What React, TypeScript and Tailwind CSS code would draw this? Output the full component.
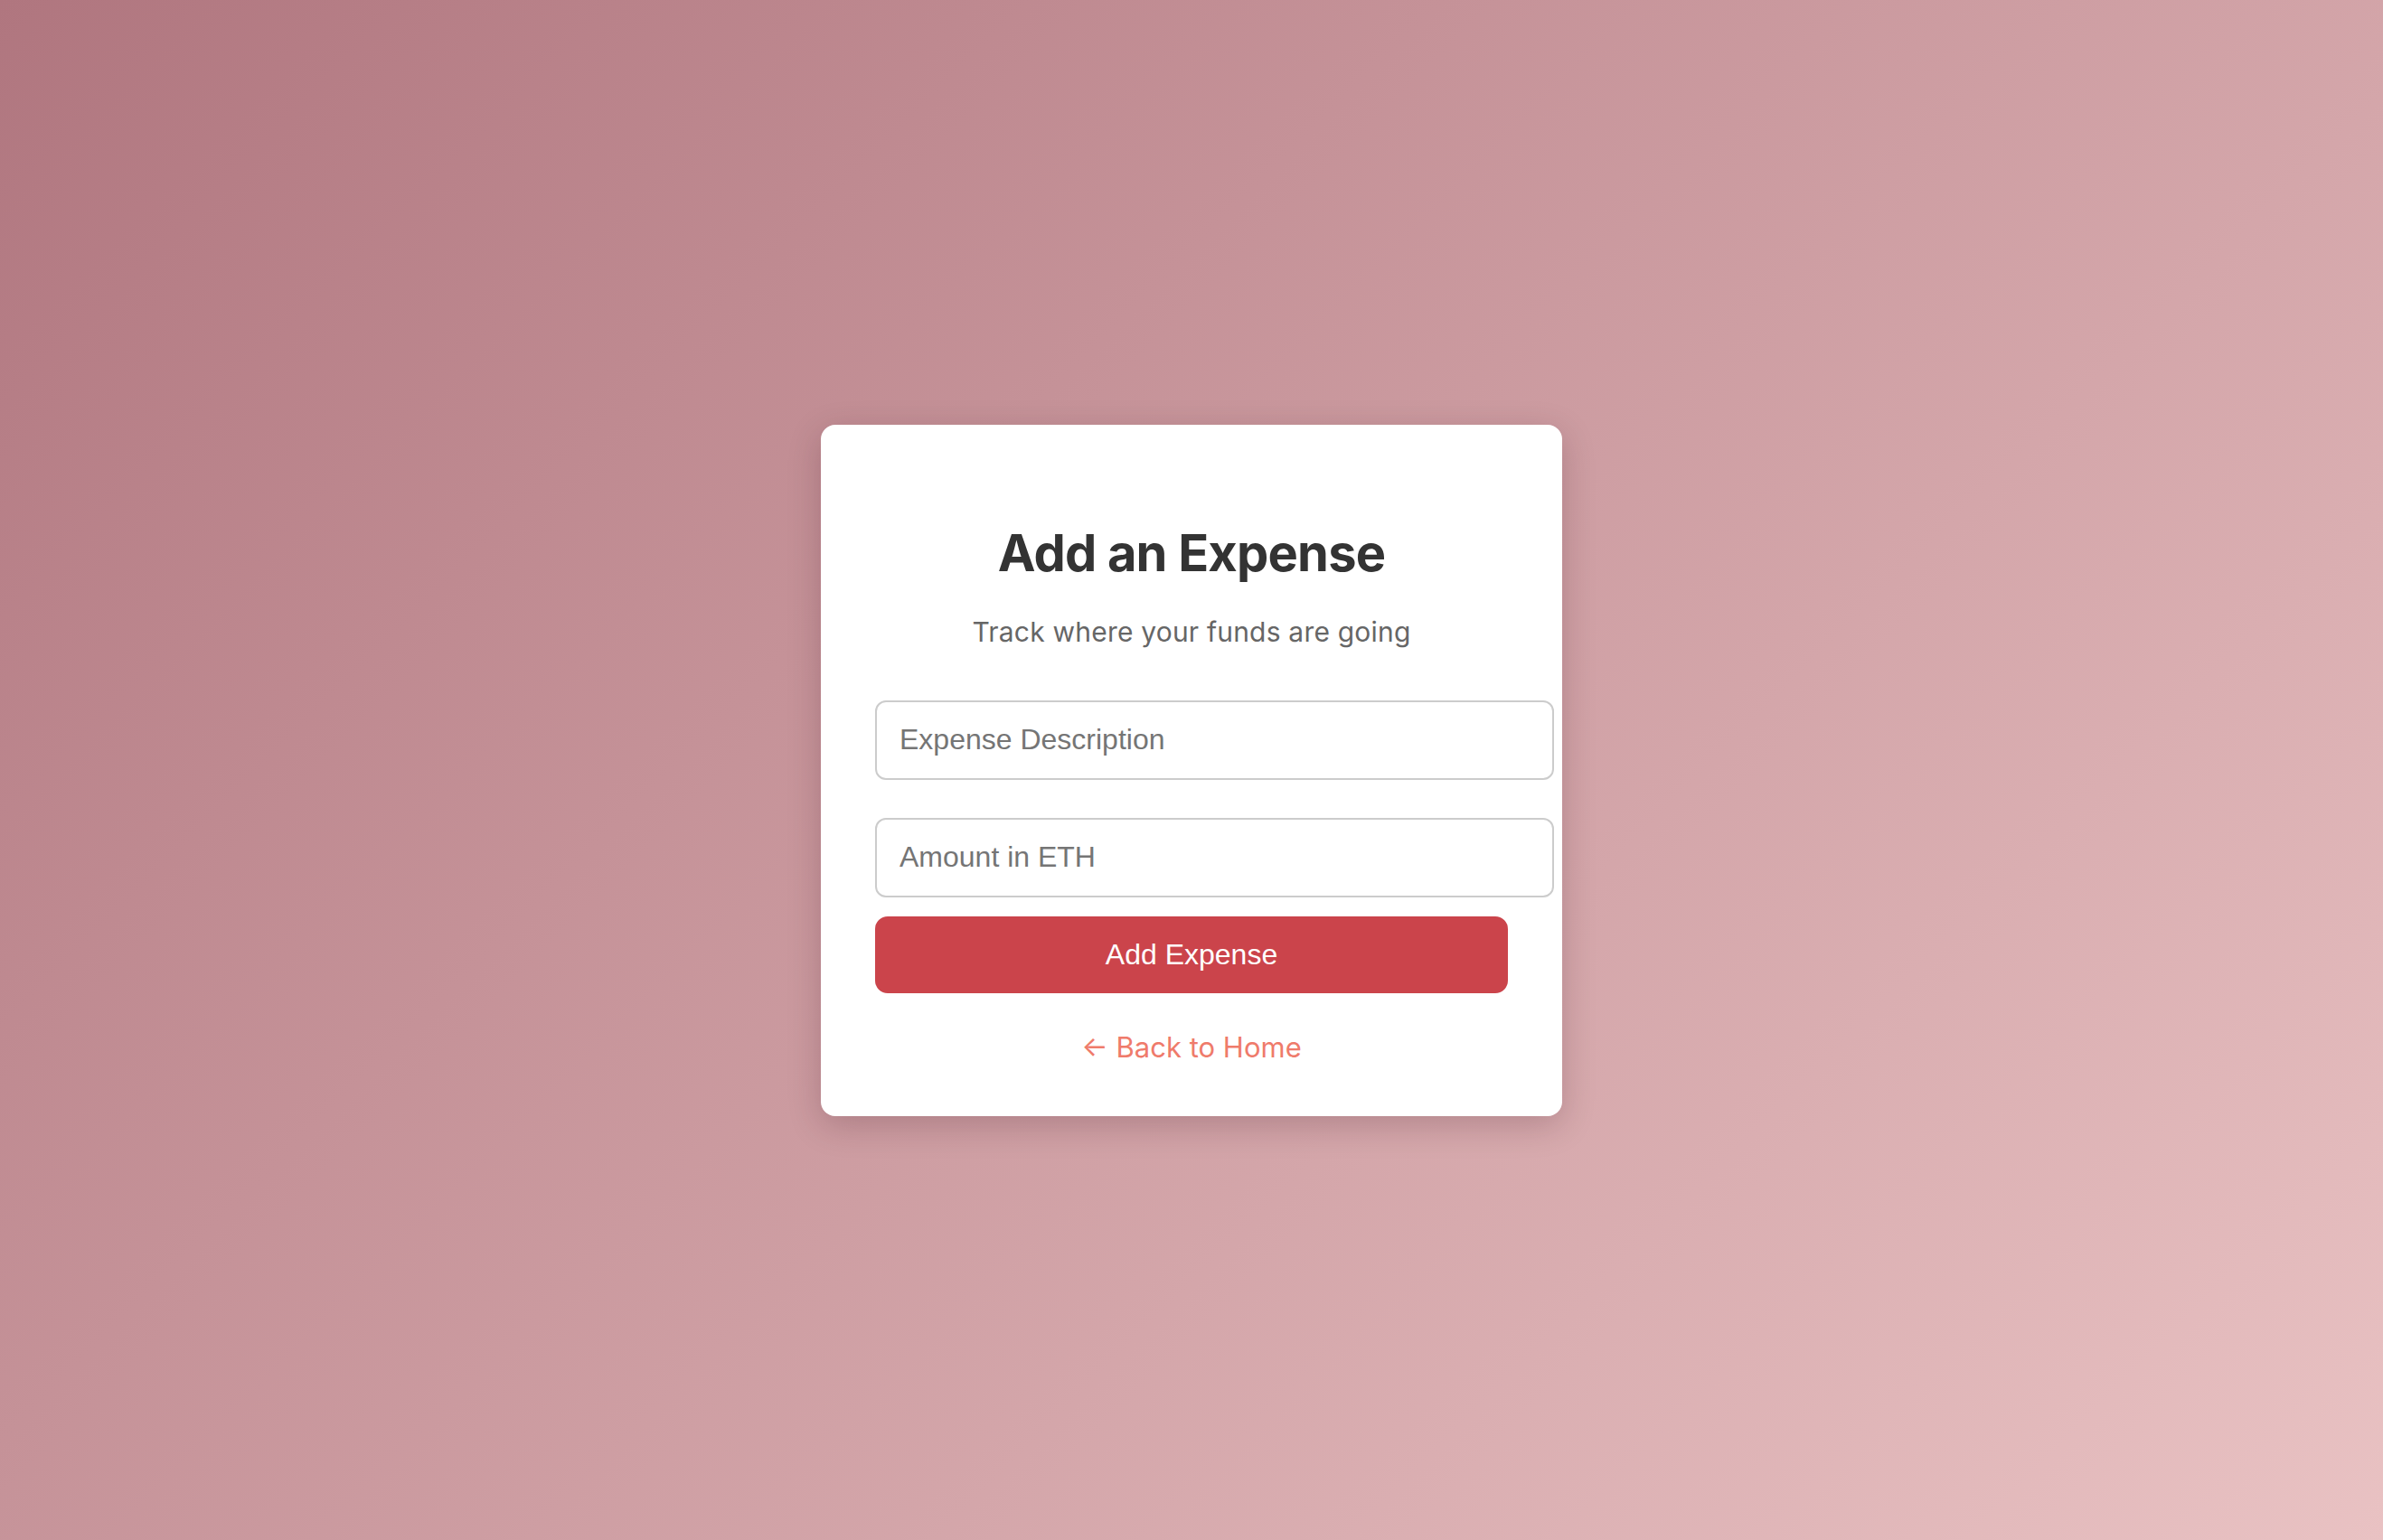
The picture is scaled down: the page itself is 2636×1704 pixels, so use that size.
import React from "react";

export default function App() {
  return (
    <div
      className="w-full h-[1704px] flex items-center justify-center bg-[linear-gradient(135deg,#b0767f_0%,#e9c2c3_100%)]"
      style={{ fontFamily: "Inter, 'Noto Sans', sans-serif" }}
    >
      <div className="w-[820px] h-[765px] bg-white rounded-[16px] shadow-[0_10px_36px_rgba(60,20,30,0.22)] px-[60px] pt-[108px] flex flex-col">
        <h1 className="text-[56px] leading-[68px] font-bold text-[#333333] text-center tracking-[-0.8px]">
          Add an Expense
        </h1>
        <p className="mt-[35px] text-[30px] leading-[36px] text-[#666666] text-center tracking-[0.2px]">
          Track where your funds are going
        </p>
        <input
          type="text"
          placeholder="Expense Description"
          className="mt-[58px] w-[751px] h-[88px] shrink-0 border-2 border-[#cccccc] rounded-[12px] px-[25px] text-[32px] text-[#333] placeholder:text-[#757575] outline-none bg-white"
          style={{ fontFamily: "'Liberation Sans', Arial, sans-serif" }}
        />
        <input
          type="text"
          placeholder="Amount in ETH"
          className="mt-[42px] w-[751px] h-[88px] shrink-0 border-2 border-[#cccccc] rounded-[12px] px-[25px] text-[32px] text-[#333] placeholder:text-[#757575] outline-none bg-white"
          style={{ fontFamily: "'Liberation Sans', Arial, sans-serif" }}
        />
        <button
          className="mt-[21px] w-[700px] h-[85px] shrink-0 rounded-[14px] bg-[#cb444b] text-white text-[32px]"
          style={{ fontFamily: "'Liberation Sans', Arial, sans-serif" }}
        >
          Add Expense
        </button>
        <a
          href="#"
          className="mt-[41px] block text-center text-[31px] leading-[38px] text-[#ef7b6b] w-[700px]"
        >
          ← Back to Home
        </a>
      </div>
    </div>
  );
}
